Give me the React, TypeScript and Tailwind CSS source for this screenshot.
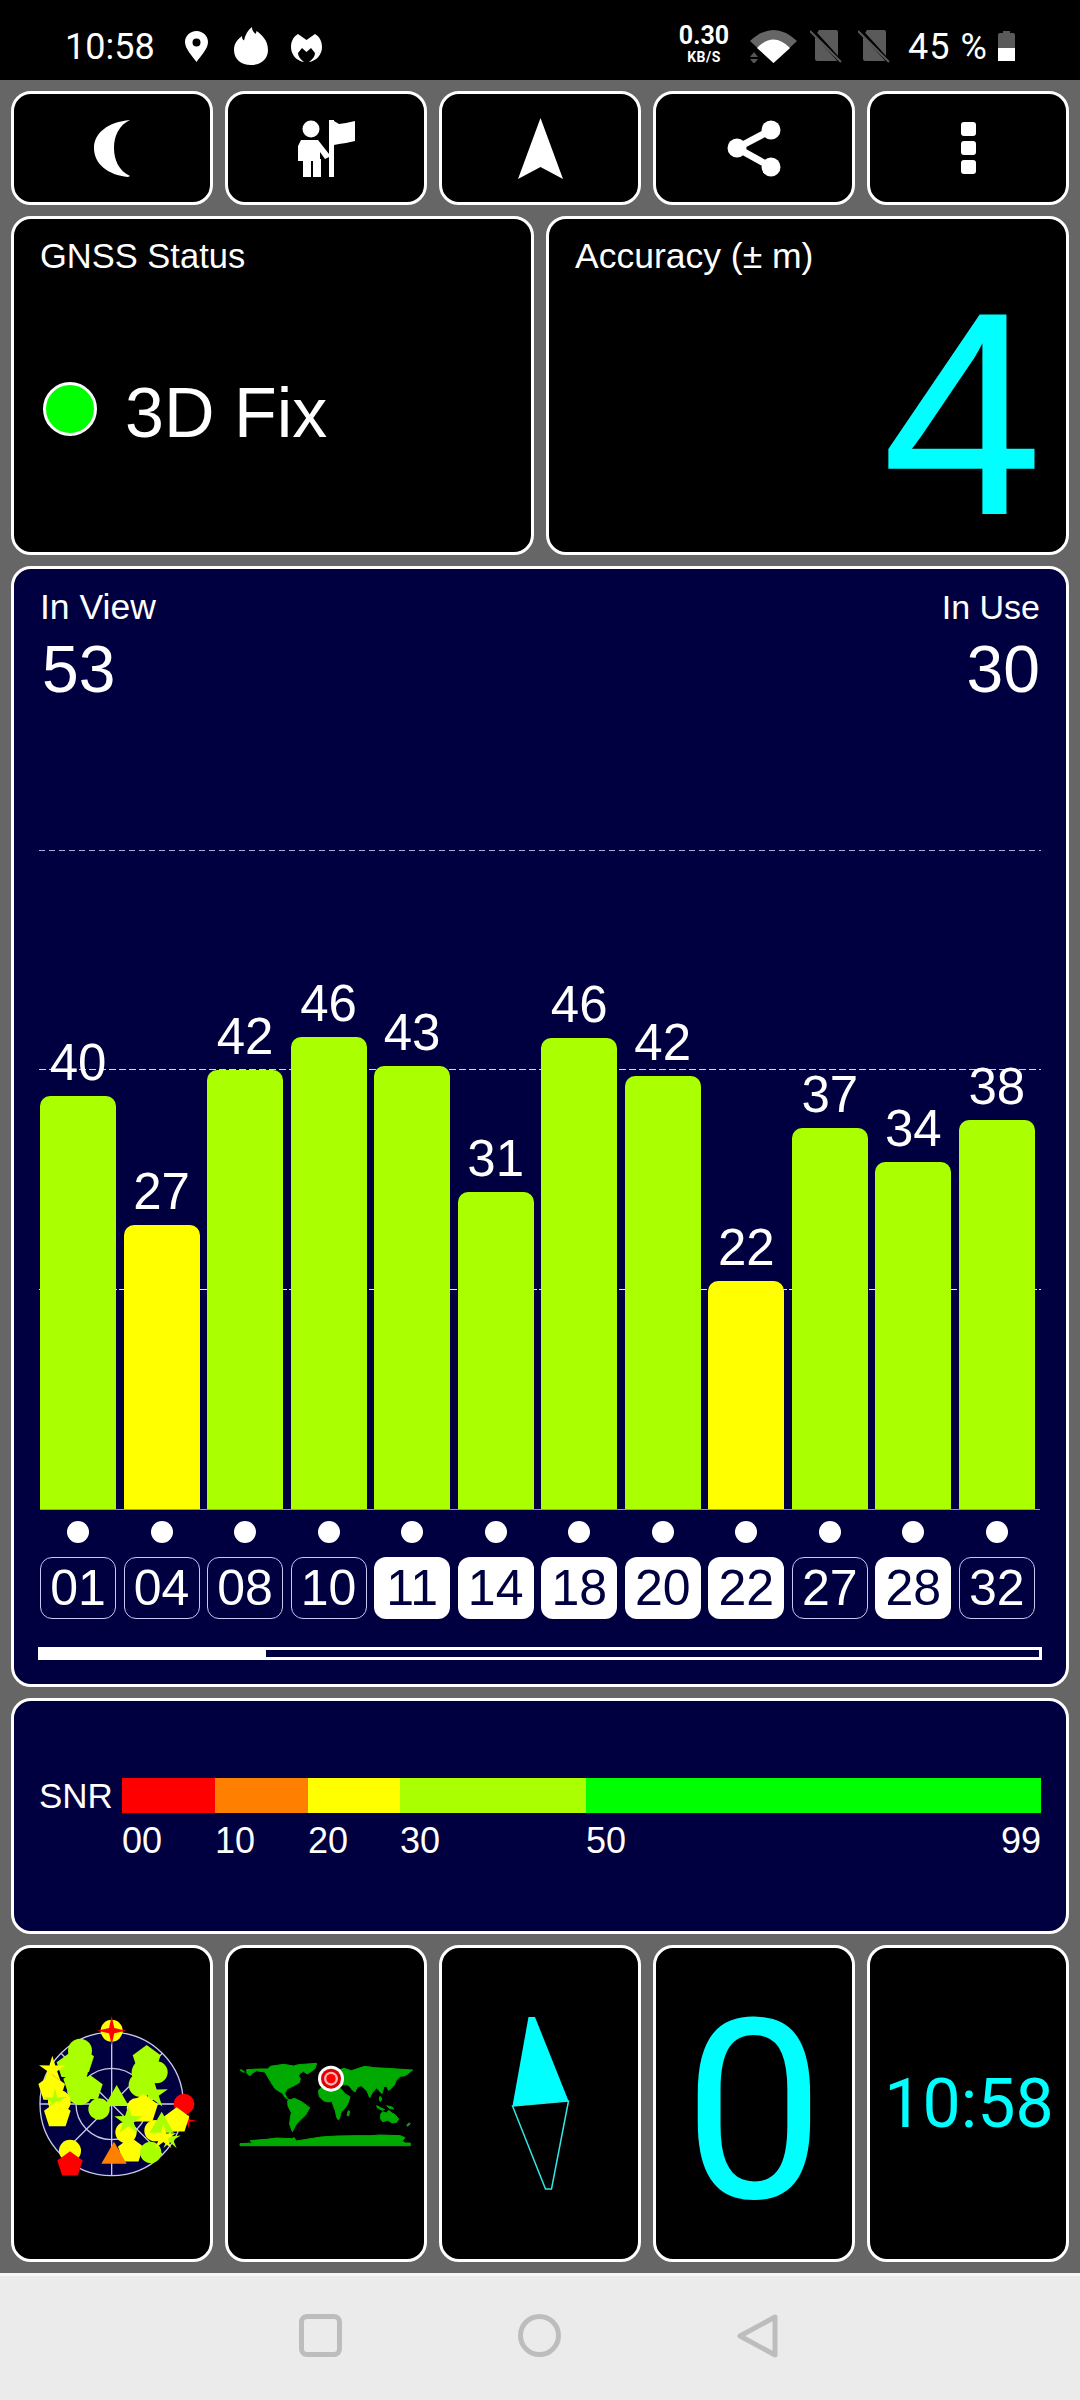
const sans = "font-['Liberation_Sans',Arial,sans-serif]";
const roboto = "font-['Roboto',sans-serif]";

const satellites = [
  { id: '01', snr: 40, h: 413, used: false },
  { id: '04', snr: 27, h: 284, used: false },
  { id: '08', snr: 42, h: 439, used: false },
  { id: '10', snr: 46, h: 472, used: false },
  { id: '11', snr: 43, h: 443, used: true },
  { id: '14', snr: 31, h: 317, used: true },
  { id: '18', snr: 46, h: 471, used: true },
  { id: '20', snr: 42, h: 433, used: true },
  { id: '22', snr: 22, h: 228, used: true },
  { id: '27', snr: 37, h: 381, used: false },
  { id: '28', snr: 34, h: 347, used: true },
  { id: '32', snr: 38, h: 389, used: false },
];

const snrScale = [
  { label: '00', w: 'w-[93px]', bg: 'bg-[#ff0000]' },
  { label: '10', w: 'w-[93px]', bg: 'bg-[#ff8000]' },
  { label: '20', w: 'w-[92px]', bg: 'bg-[#ffff00]' },
  { label: '30', w: 'w-[186px]', bg: 'bg-[#aaff00]' },
  { label: '50', w: 'flex-1', bg: 'bg-[#00ff00]' },
];

function poly(cx: number, cy: number, r: number, n: number) {
  const pts: string[] = [];
  for (let i = 0; i < n; i++) {
    const a = -Math.PI / 2 + (i * 2 * Math.PI) / n;
    pts.push(`${cx + r * Math.cos(a)},${cy + r * Math.sin(a)}`);
  }
  return pts.join(' ');
}

function star(cx: number, cy: number, r: number, inner: number, n: number) {
  const pts: string[] = [];
  for (let i = 0; i < n * 2; i++) {
    const a = -Math.PI / 2 + (i * Math.PI) / n;
    const d = i % 2 ? inner : r;
    pts.push(`${cx + d * Math.cos(a)},${cy + d * Math.sin(a)}`);
  }
  return pts.join(' ');
}

function Card({ className, children }: { className: string; children?: React.ReactNode }) {
  return <div className={`rounded-[20px] border-[3px] border-white ${className}`}>{children}</div>;
}

function StatusBar() {
  return (
    <div className="h-[80px] bg-black text-white flex items-start relative shrink-0">
      <span className={`${roboto} text-[36px] leading-none ml-[65px] mt-[29px] w-[89px]`}>10:58</span>
      <svg className="ml-[31px] mt-[31px]" width="23" height="31" viewBox="0 0 23 31">
        <path fillRule="evenodd" fill="#fff" d="M11.5 0C5 0 0 5 0 11c0 7 8 15 11.5 20C15 26 23 18 23 11 23 5 18 0 11.5 0zm0 7.500a4 4 0 1 1 0 8 4 4 0 0 1 0-8z" />
      </svg>
      <svg className="ml-[26px] mt-[27px]" width="34" height="38" viewBox="0 0 34 38">
        <path fill="#fff" d="M17 38C7 38 0 32 0 23 0 16 4 12 8 9c0 2 .5 3.500 2 4.500C11 8 14 3 18 0c0 4 2 5 3.500 7 .5-1 1-2 1-3 6 4 11.500 10 11.500 19 0 9-7 15-17 15z" />
      </svg>
      <svg className="ml-[23px] mt-[34px]" width="31" height="28" viewBox="0 0 31 28">
        <path fill="#fff" d="M7 0L15.500 6 24 0c5 3 7 8 7 13 0 8-6 14-13 15 4-3 6-6 6-9l-4-5-4.500 4-4.500-4-4 5c0 3 2 6 6 9C6 27 0 21 0 13 0 8 2 3 7 0z" />
      </svg>
      <div className={`${roboto} absolute left-[680px] top-[24px] w-[48px] flex flex-col items-center font-bold`}>
        <span className="text-[25px] leading-[24px]">0.30</span>
        <span className="text-[14px] leading-[14px] tracking-[0.5px] mt-[2px]">KB/S</span>
      </div>
      <svg className="absolute left-[750px] top-[30px]" width="47" height="33" viewBox="0 0 47 33">
        <path fill="#666" d="M0 11Q23.500-11 47 11L23.500 33z" />
        <path fill="#fff" d="M7 18Q23.500 1 40 18L23.500 33z" />
        <path fill="#555" d="M0 27l4-5 4 5zM0 29l4 5 4-5z" />
      </svg>
      {[810, 858].map((left) => (
        <svg key={left} className={left === 810 ? 'absolute left-[810px] top-[30px]' : 'absolute left-[858px] top-[30px]'} width="32" height="33" viewBox="0 0 32 33">
          <path fill="#5a5a5a" d="M9 0h17a2 2 0 0 1 2 2v29H7a2 2 0 0 1-2-2V6z" />
          <path stroke="#000" strokeWidth="4" d="M1-1l30 33" />
          <path stroke="#5a5a5a" strokeWidth="2" d="M0 1l31 31" />
        </svg>
      ))}
      <span className={`${roboto} absolute left-[908px] top-[29px] text-[36px] leading-none tracking-[1px]`}>45 %</span>
      <div className="absolute left-[998px] top-[31px] w-[17px] h-[30px] flex flex-col items-center">
        <div className="w-[7px] h-[2px] bg-[#5a5a5a]" />
        <div className="w-[17px] h-[15px] bg-[#5a5a5a] rounded-t-[2px]" />
        <div className="w-[17px] h-[13px] bg-white" />
      </div>
    </div>
  );
}

function ToolButtons() {
  return (
    <div className="grid grid-cols-5 gap-[12px] h-[114px]">
      <Card className="bg-black flex items-center justify-center">
        <svg width="36" height="57" viewBox="0 0 36 57">
          <path fill="#fff" d="M36 0C25 5 20 16 20 28c0 12 5 23 16 28l-2 1C14 55 0 44 0 28 0 13 14 2 36 0z" />
        </svg>
      </Card>
      <Card className="bg-black flex items-center justify-center">
        <svg width="58" height="57" viewBox="0 0 58 57">
          <circle cx="14" cy="9" r="8.500" fill="#fff" />
          <path fill="#fff" d="M4 20h17l11 14v3l-4 2-5-7v7l1 0v18h-8V41h-2v16H6V41H1V26z" />
          <rect x="32" y="0" width="5" height="57" fill="#fff" />
          <path fill="#fff" d="M37 1l5 3 7-1 9-2v20l-9 2-7 1-5 1z" />
        </svg>
      </Card>
      <Card className="bg-black flex items-center justify-center">
        <svg width="45" height="61" viewBox="0 0 45 61">
          <path fill="#fff" d="M22.500 0L45 61 22.500 49 0 61z" />
        </svg>
      </Card>
      <Card className="bg-black flex items-center justify-center">
        <svg width="54" height="57" viewBox="0 0 54 57">
          <path stroke="#fff" strokeWidth="7" fill="none" d="M44 10L10 28l34 19" />
          <circle cx="44" cy="10" r="9.500" fill="#fff" />
          <circle cx="10" cy="28" r="9.500" fill="#fff" />
          <circle cx="44" cy="47" r="9.500" fill="#fff" />
        </svg>
      </Card>
      <Card className="bg-black flex flex-col items-center justify-center gap-[5px]">
        <div className="w-[15px] h-[14px] rounded-[3px] bg-white" />
        <div className="w-[15px] h-[14px] rounded-[3px] bg-white" />
        <div className="w-[15px] h-[14px] rounded-[3px] bg-white" />
      </Card>
    </div>
  );
}

function StatusCards() {
  return (
    <div className={`${sans} grid grid-cols-2 grid-rows-[339px] gap-[12px] text-white`}>
      <Card className="bg-black pt-[20px] pl-[26px]">
        <div className="text-[34.5px] leading-[35px]">GNSS Status</div>
        <div className="flex items-start mt-[104px] ml-[3px] gap-[28px]">
          <div className="w-[54px] h-[54px] mt-[4px] rounded-full bg-[#00ff00] border-[3px] border-white" />
          <span className="text-[70px] leading-none">3D Fix</span>
        </div>
      </Card>
      <Card className="bg-black pt-[20px] pl-[26px] pr-[23px]">
        <div className="text-[35.5px] leading-[35px]">Accuracy (± m)</div>
        <div className="flex justify-end h-[270px] -mt-[6px] text-[290px] leading-none text-[#00ffff]">4</div>
      </Card>
    </div>
  );
}

function SatelliteCard() {
  return (
    <Card className={`${sans} h-[1121px] bg-[#000040] text-white px-[26px] pt-[20px]`}>
      <div className="flex justify-between">
        <div>
          <div className="text-[35.5px] leading-[36px]">In View</div>
          <div className="text-[66px] leading-[68px] mt-[10px] ml-[2px]">53</div>
        </div>
        <div className="text-right">
          <div className="text-[34px] leading-[36px]">In Use</div>
          <div className="text-[66px] leading-[68px] mt-[10px]">30</div>
        </div>
      </div>

      <div className="relative mt-[106px] h-[701px] border-b border-[#8c8ce0]">
        <div className="absolute -left-[1px] -right-[1px] top-[41px] h-[1px] bg-[repeating-linear-gradient(90deg,#a9a9dc_0_6px,transparent_6px_10px)]" />
        <div className="absolute -left-[1px] -right-[1px] top-[260px] h-[1px] bg-[repeating-linear-gradient(90deg,#d5d5f0_0_7px,transparent_7px_10px)]" />
        <div className="absolute -left-[1px] -right-[1px] top-[480px] h-[1px] bg-[repeating-linear-gradient(90deg,#e5e5f5_0_8px,transparent_8px_10px)]" />
        <div className="relative w-[995px] h-full flex justify-between items-end">
          {satellites.map((s) => (
            <div key={s.id} className="w-[76px] flex flex-col items-center">
              <span className="text-[51px] leading-none mb-[8px]">{s.snr}</span>
              <div
                className={`w-full rounded-t-[10px] ${s.snr < 30 ? 'bg-[#ffff00]' : 'bg-[#aaff00]'}`}
                style={{ height: s.h }}
              />
            </div>
          ))}
        </div>
      </div>

      <div className="w-[995px] flex justify-between mt-[11px]">
        {satellites.map((s) => (
          <div key={s.id} className="w-[76px] flex justify-center">
            <div className="w-[22px] h-[22px] rounded-full bg-white" />
          </div>
        ))}
      </div>

      <div className="w-[995px] flex justify-between mt-[14px]">
        {satellites.map((s) => (
          <div
            key={s.id}
            className={`w-[76px] h-[62px] rounded-[12px] flex items-center justify-center text-[50px] leading-none ${
              s.used ? 'bg-white text-[#000040]' : 'border border-[#c8c8f0] text-white'
            }`}
          >
            {s.id}
          </div>
        ))}
      </div>

      <div className="-mx-[2px] mt-[28px] h-[13px] border-[3px] border-white">
        <div className="w-[225px] h-full bg-white" />
      </div>
    </Card>
  );
}

function SnrCard() {
  return (
    <Card className={`${sans} relative h-[236px] bg-[#000040] text-white pl-[26px] pr-[25px] pt-[77px]`}>
      <div className="flex items-center">
        <span className="w-[82px] text-[35px] leading-[35px] -ml-[1px] mr-[1px]">SNR</span>
        <div className="flex-1 flex h-[35px]">
          {snrScale.map((s) => (
            <div key={s.label} className={`${s.w} ${s.bg}`} />
          ))}
        </div>
      </div>
      <div className="flex ml-[82px] mt-[10px] text-[36px] leading-none">
        {snrScale.map((s) => (
          <span key={s.label} className={s.w}>
            {s.label}
          </span>
        ))}
        <span className="absolute right-[25px]">99</span>
      </div>
    </Card>
  );
}

function Radar() {
  const lime = '#aaff00';
  const yellow = '#ffff00';
  const red = '#ff0000';
  return (
    <svg width="190" height="190" viewBox="0 0 570 570">
      <circle cx="275" cy="285" r="215" fill="#000040" stroke="#c8c8e8" strokeWidth="4" />
      <circle cx="275" cy="285" r="107" fill="none" stroke="#c8c8e8" strokeWidth="4" />
      <path stroke="#c8c8e8" strokeWidth="4" d="M275 70v430M60 285h430M123 133l304 304M123 437l304-304" />
      <circle cx="275" cy="65" r="33" fill={yellow} />
      <polygon points={star(275, 65, 44, 11, 4)} fill={red} />

      <circle cx="180" cy="125" r="36" fill={lime} />
      <polygon points={poly(182, 155, 42, 5)} fill={lime} />
      <polygon points={poly(148, 172, 40, 5)} fill={lime} />
      <circle cx="170" cy="185" r="34" fill={lime} />
      <polygon points={poly(170, 222, 42, 5)} fill={lime} />
      <polygon points={poly(210, 238, 40, 5)} fill={lime} />
      <circle cx="180" cy="250" r="38" fill={lime} />
      <polygon points={poly(380, 152, 44, 5)} fill={lime} />
      <circle cx="375" cy="190" r="40" fill={lime} />
      <circle cx="410" cy="190" r="33" fill={lime} />
      <circle cx="362" cy="228" r="36" fill={lime} />
      <polygon points={star(400, 255, 46, 17, 5)} fill={lime} />

      <polygon points={poly(95, 238, 42, 5)} fill={yellow} />
      <polygon points={star(97, 182, 42, 15, 5)} fill={yellow} />
      <circle cx="118" cy="278" r="34" fill={yellow} />
      <polygon points={star(105, 275, 38, 11, 5)} fill={lime} />
      <polygon points={poly(112, 318, 42, 5)} fill={yellow} />

      <circle cx="237" cy="300" r="32" fill={lime} />
      <polygon points={poly(290, 270, 42, 3)} fill={lime} />

      <circle cx="350" cy="297" r="30" fill={yellow} />
      <polygon points={poly(370, 300, 46, 5)} fill={yellow} />
      <circle cx="318" cy="370" r="32" fill={yellow} />
      <polygon points={star(325, 335, 44, 17, 5)} fill={lime} />
      <polygon points={poly(332, 425, 40, 5)} fill={yellow} />
      <circle cx="392" cy="430" r="32" fill={lime} />
      <polygon points={poly(282, 442, 44, 3)} fill="#ff8000" />

      <circle cx="150" cy="425" r="33" fill={yellow} />
      <polygon points={poly(150, 467, 40, 5)} fill={red} />

      <polygon points={star(505, 335, 24, 5, 4)} fill={red} />
      <circle cx="492" cy="285" r="31" fill={red} />
      <polygon points={poly(470, 335, 40, 5)} fill={yellow} />
      <circle cx="405" cy="365" r="32" fill={yellow} />
      <polygon points={poly(425, 350, 42, 3)} fill={lime} />
      <polygon points={star(450, 390, 34, 10, 5)} fill={lime} />
      <polygon points={star(430, 385, 40, 14, 5)} fill={yellow} />
    </svg>
  );
}

function WorldMap() {
  return (
    <svg width="196" height="190" viewBox="24 0 588 570">
      <g fill="#00aa00" stroke="#00aa00" strokeWidth="3">
        <path d="M60 182l8 2 6 6-8-2zM80 182l35-2 28 0 8-8 40-6 30 5 14-4 55-4-5 16-23 16-12-8-10 6-4 8 5 8-3 12-18 10-18 8-8 14 8 16 7 4-12-6-10-14-22-14-14-22-16-28-26-4-12 8-8 8-8-8z" />
        <path d="M203 275l20-7 22 10 24 18-12 22-15 14-13 14-12 22-8-22 2-20 3-15-10-20z" />
        <path d="M295 245l15-14 30 2 22 6 14 16 14 8-6 20-10 16-10 8-5 20-4 6-5-8-4-20-5-12-5-16-12 2-14-4-12-12zM385 305l4 2-3 14-5-2z" />
        <path d="M330 192l42-14 22 7 40-13 30 4 36 2 78 5-12 10-10 7-15 2-12 12-6 14-10 11-8 5-3-10-10-2-6 22-10-10-6-8-13 15-8 15-7-18-7-8-12-10-10 3-8 16-8-6-9-12-8-4-14 1-14 2-12 3 2-12 8-9z" />
        <path d="M482 316l6-8 12 4 6-8 10 8 8 4 12 14-6 10-14 2-12-8-16 4-6-8zM470 290l12 6 12 6-8 2-14-8zM500 290l16 4 6 6-14-2zM560 348l7-6 4 2-8 8zM480 262l6 8-5 8-3-8z" />
        <path d="M60 404l38-2-8-7 50-4 30-4 45 2 8-3 5 10 25-4 50-8 48-3 60-1 40 0 30-2 60 2 14 6-8 10 8 6 16 0v8H60z" />
      </g>
      <circle cx="333" cy="209" r="39" fill="#fff" />
      <circle cx="333" cy="209" r="30" fill="#e00000" />
      <circle cx="333" cy="209" r="21" fill="#ffb0b0" />
      <circle cx="333" cy="209" r="14" fill="#ff0000" />
    </svg>
  );
}

function BottomCards() {
  return (
    <div className="grid grid-cols-5 gap-[12px] h-[317px]">
      <Card className="bg-black pl-[6px] pt-[61px]">
        <Radar />
      </Card>
      <Card className="bg-black pt-[61px]">
        <WorldMap />
      </Card>
      <Card className="bg-black flex justify-center pt-[61px]">
        <svg width="80" height="190" viewBox="499.500 2010 80 190">
          <path fill="#00ffff" d="M528 2018h6.500L568 2102l-56 5z" />
          <path fill="none" stroke="#33e6e6" strokeWidth="1.500" d="M512 2107l56-5-17 88h-6z" />
        </svg>
      </Card>
      <Card className={`${roboto} bg-black flex justify-center pt-[40px]`}>
        <span className="text-[250px] leading-none text-[#00ffff]">0</span>
      </Card>
      <Card className={`${roboto} bg-black flex justify-center pt-[122px]`}>
        <span className="text-[68px] leading-none text-[#00ffff] ml-[2px]">10:58</span>
      </Card>
    </div>
  );
}

function NavBar() {
  return (
    <div className="flex-1 bg-[#ebebeb] border-t-[3px] border-[#f6f6f6] flex items-center justify-center gap-[176px] pb-[5px] pr-[3px]">
      <div className="w-[43px] h-[43px] rounded-[8px] border-[5px] border-[#bdbdbd]" />
      <div className="w-[43px] h-[43px] rounded-full border-[5px] border-[#bdbdbd]" />
      <svg width="42" height="44" viewBox="0 0 42 44">
        <path fill="none" stroke="#bdbdbd" strokeWidth="5" strokeLinejoin="round" d="M38 3v38L3 22z" />
      </svg>
    </div>
  );
}

export default function App() {
  return (
    <div className="w-[1080px] h-[2400px] bg-[#666666] flex flex-col overflow-hidden">
      <StatusBar />
      <div className="relative px-[11px] pt-[11px] pb-[11px] flex flex-col gap-[11px]">
        <ToolButtons />
        <StatusCards />
        <SatelliteCard />
        <SnrCard />
        <BottomCards />
      </div>
      <NavBar />
    </div>
  );
}
